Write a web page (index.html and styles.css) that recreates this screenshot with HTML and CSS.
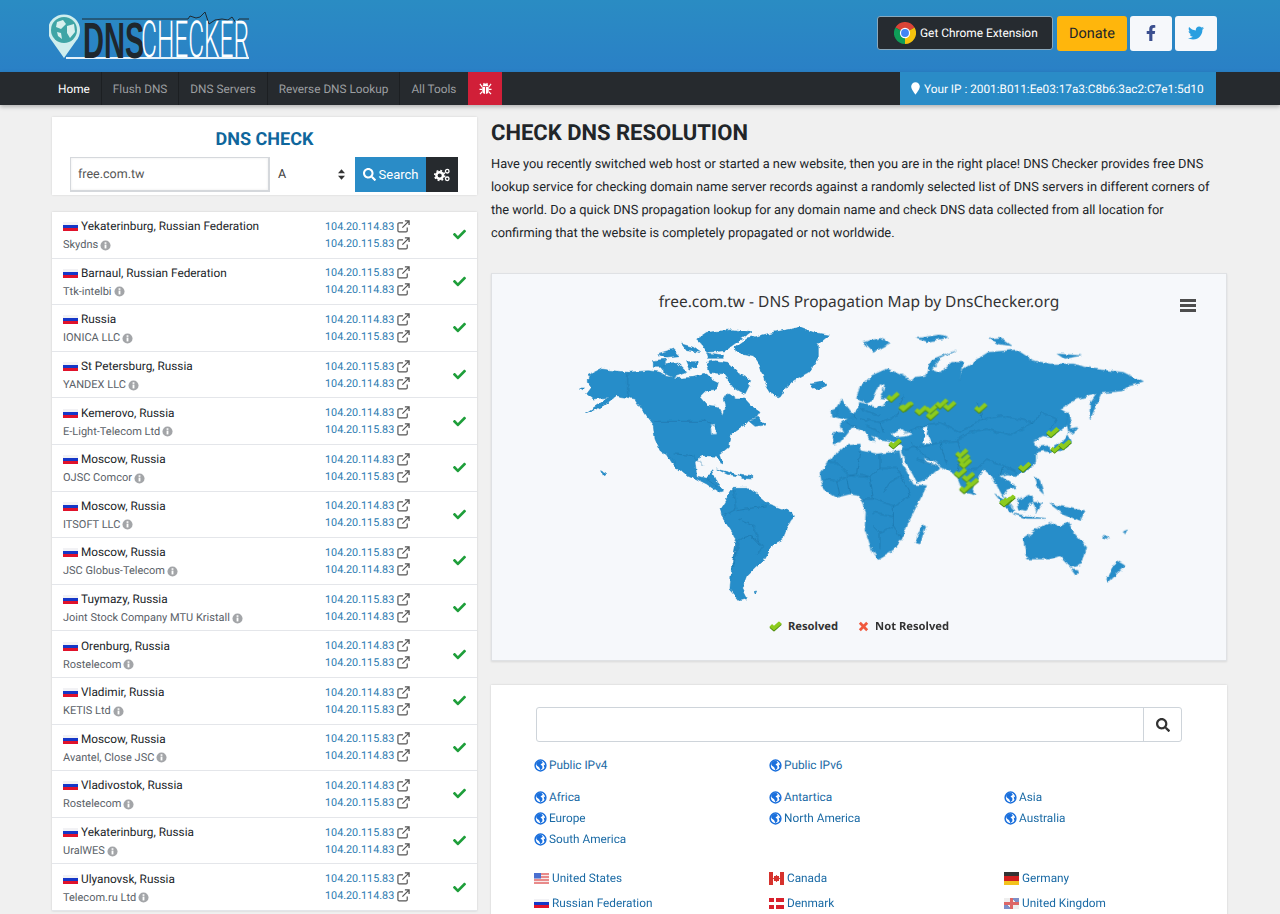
FILE: index.html
```html
<!DOCTYPE html>
<html lang="en">
<head>
<meta charset="utf-8">
<title>DNS Checker</title>
<link rel="stylesheet" href="styles.css">
</head>
<body>
<svg class="defs" width="0" height="0" aria-hidden="true">
  <filter id="rough" x="-5%" y="-5%" width="110%" height="110%"><feTurbulence type="fractalNoise" baseFrequency="0.05" numOctaves="3" seed="4"/><feDisplacementMap in="SourceGraphic" scale="14" xChannelSelector="R" yChannelSelector="G"/></filter>
  <symbol id="ext" viewBox="0 0 14 14"><path d="M11 8.200V11.500A1.300 1.300 0 0 1 9.700 12.800H2.300A1.300 1.300 0 0 1 1 11.500V4.300A1.300 1.300 0 0 1 2.300 3H6.500" fill="none" stroke="currentColor" stroke-width="1.300"/><path d="M5.800 8.200 12.500 1.500M8.500 1H13V5.500" fill="none" stroke="currentColor" stroke-width="1.400"/></symbol>
  <symbol id="check" viewBox="0 0 512 512"><path d="M173.898 439.404l-166.4-166.4c-9.997-9.997-9.997-26.206 0-36.204l36.203-36.204c9.997-9.998 26.207-9.998 36.204 0L192 312.69 432.095 72.596c9.997-9.997 26.207-9.997 36.204 0l36.203 36.204c9.997 9.997 9.997 26.206 0 36.204l-294.4 294.401c-9.998 9.997-26.207 9.997-36.204-.001z" fill="currentColor"/></symbol>
  <symbol id="search" viewBox="0 0 512 512"><path d="M505 442.7L405.3 343c-4.5-4.5-10.6-7-17-7H372c27.6-35.3 44-79.7 44-128C416 93.1 322.9 0 208 0S0 93.1 0 208s93.1 208 208 208c48.3 0 92.7-16.4 128-44v16.3c0 6.4 2.5 12.5 7 17l99.700 99.700c9.400 9.400 24.600 9.400 33.900 0l28.300-28.300c9.400-9.400 9.400-24.600.1-34zM208 336c-70.700 0-128-57.200-128-128 0-70.700 57.200-128 128-128 70.700 0 128 57.200 128 128 0 70.700-57.200 128-128 128z" fill="currentColor"/></symbol>
  <symbol id="info" viewBox="0 0 12 12"><circle cx="6" cy="6" r="5.500" fill="#a3a5a8"/><rect x="5" y="5" width="2" height="4.200" fill="#fff"/><rect x="5" y="2.500" width="2" height="1.700" fill="#fff"/></symbol>
  <symbol id="globe" viewBox="0 0 14 14"><circle cx="7" cy="7" r="5.800" fill="#fff" stroke="#1a6fdc" stroke-width="1.600"/><path d="M4 2.500 8 2 9.500 4 7 6 9 7.500 9 10 7 12 5.500 9 3 7 2.200 5Z" fill="#1a6fdc"/><path d="M10.500 6 12.500 7 11 10Z" fill="#1a6fdc"/></symbol>
  <symbol id="tick" viewBox="0 0 30 24">
    <path d="M1 15 7 9 11.500 13 23 2 29.500 8 11.500 24Z" fill="#4f8a10"/>
    <path d="M1 12.500 7 6.500 11.500 10.500 23 0 29.500 5.500 11.500 21.500Z" fill="#8ccb1e"/>
  </symbol>
</svg>

<header class="topbar">
  <a class="logo" href="#">
    <svg class="logo-art" viewBox="0 0 210 56" width="210" height="56" aria-hidden="true">
      <path d="M15 46 3 29A16 16 0 1 1 27 29Z" fill="#cfeeee"/>
      <circle cx="15" cy="18" r="13" fill="#3fa5a6"/>
      <path d="M8 10 14 8 17 12 12 17 7 15ZM18 14 25 12 26 20 21 26 18 21ZM8 20 12 21 13 27 9 24Z" fill="#d8f0ee"/>
      <path d="M17 46H200" stroke="#e4f2fb" stroke-width="1.800"/>
      <path d="M33 7H139L141 4 147 6 151 5 156 0 160 12 166 8 173 7 179 8 183 5 187 11 190 7H200" fill="none" stroke="#1f2a33" stroke-width="1"/>
    </svg>
    <span class="logo-dns"><span>DNS</span></span>
    <span class="logo-checker"><span>CHECKER</span></span>
  </a>
  <div class="top-actions">
    <a class="btn-chrome" href="#">
      <svg viewBox="0 0 24 24" width="22" height="22" aria-hidden="true">
        <path d="M12 12 1.600 6A12 12 0 0 1 22.400 6Z" fill="#db4437"/>
        <path d="M12 12 22.400 6A12 12 0 0 1 12 24Z" fill="#f4c20d"/>
        <path d="M12 12 12 24A12 12 0 0 1 1.600 6Z" fill="#0f9d58"/>
        <circle cx="12" cy="12" r="5.600" fill="#fff"/>
        <circle cx="12" cy="12" r="4.300" fill="#4285f4"/>
      </svg>
      Get Chrome Extension
    </a>
    <a class="btn-donate" href="#">Donate</a>
    <a class="btn-social" href="#"><svg viewBox="0 0 320 512" width="10" height="16" aria-hidden="true"><path fill="#3b4f8f" d="M279.14 288l14.22-92.66h-88.91v-60.130c0-25.350 12.420-50.060 52.240-50.060h40.420V6.260S260.430 0 225.360 0c-73.220 0-121.080 44.380-121.080 124.720v70.620H22.890V288h81.390v224h100.170V288z"/></svg></a>
    <a class="btn-social" href="#"><svg viewBox="0 0 512 512" width="16" height="16" aria-hidden="true"><path fill="#2a9fe0" d="M459.370 151.716c.325 4.548.325 9.097.325 13.645 0 138.720-105.583 298.558-298.558 298.558-59.452 0-114.680-17.219-161.137-47.106 8.447.974 16.568 1.299 25.340 1.299 49.055 0 94.213-16.568 130.274-44.832-46.132-.975-84.792-31.188-98.112-72.772 6.498.974 12.995 1.624 19.818 1.624 9.421 0 18.843-1.300 27.614-3.573-48.081-9.747-84.143-51.980-84.143-102.985v-1.299c13.969 7.797 30.214 12.670 47.431 13.319-28.264-18.843-46.781-51.005-46.781-87.391 0-19.492 5.197-37.360 14.294-52.954 51.655 63.675 129.300 105.258 216.365 109.807-1.624-7.797-2.599-15.918-2.599-24.040 0-57.828 46.782-104.934 104.934-104.934 30.213 0 57.502 12.670 76.670 33.137 23.715-4.548 46.456-13.320 66.599-25.340-7.798 24.366-24.366 44.833-46.132 57.827 21.117-2.273 41.584-8.122 60.426-16.243-14.292 20.791-32.161 39.308-52.628 54.253z"/></svg></a>
  </div>
</header>

<nav class="navbar">
  <a class="nav-item active" href="#">Home</a>
  <a class="nav-item" href="#">Flush DNS</a>
  <a class="nav-item" href="#">DNS Servers</a>
  <a class="nav-item" href="#">Reverse DNS Lookup</a>
  <a class="nav-item last" href="#">All Tools</a>
  <a class="nav-bug" href="#" aria-label="Report bug">
    <svg viewBox="0 0 14 14" width="13" height="13" aria-hidden="true"><path d="M4 4.500A3 3 0 0 1 10 4.500ZM3.500 5.500H6.500V13A3.500 3.500 0 0 1 3.500 10ZM7.500 5.500H10.500V10A3.500 3.500 0 0 1 7.500 13Z" fill="#fff"/><path d="M1 2 3.500 5.500M13 2 10.500 5.500M.5 8H3.500M13.500 8H10.500M1 13 3.500 10.500M13 13 10.500 10.500M5 1 6 3M9 1 8 3" stroke="#fff" stroke-width="1.200"/></svg>
  </a>
  <div class="nav-ip">
    <svg viewBox="0 0 10 14" width="9" height="13" aria-hidden="true"><path d="M5 0A4.800 4.800 0 0 1 9.800 4.800C9.800 8 6 12 5 14 4 12 .2 8 .2 4.800A4.800 4.800 0 0 1 5 0Z" fill="#fff"/></svg>
    Your IP : 2001:B011:Ee03:17a3:C8b6:3ac2:C7e1:5d10
  </div>
</nav>

<main class="layout">
  <section class="left">
    <div class="check-card">
      <h2>DNS CHECK</h2>
      <form class="check-form">
        <div class="check-input">free.com.tw</div>
        <div class="check-select">A
          <svg viewBox="0 0 8 12" width="7" height="11" aria-hidden="true"><path d="M4 0 8 4.500H0ZM4 12 0 7.500H8Z" fill="#333"/></svg>
        </div>
        <button class="check-btn" type="button"><svg width="13" height="13" aria-hidden="true"><use href="#search"/></svg> Search</button>
        <button class="gear-btn" type="button" aria-label="Settings">
          <svg viewBox="0 0 18 14" width="17" height="14" aria-hidden="true">
            <circle cx="6" cy="7.500" r="3.500" fill="none" stroke="#fff" stroke-width="2.600"/>
            <circle cx="6" cy="7.500" r="5.200" fill="none" stroke="#fff" stroke-width="1.800" stroke-dasharray="2 2.080"/>
            <circle cx="14" cy="3" r="1.900" fill="none" stroke="#fff" stroke-width="1.400"/>
            <circle cx="14" cy="11" r="1.900" fill="none" stroke="#fff" stroke-width="1.400"/>
          </svg>
        </button>
      </form>
    </div>

    <div class="results">
      <div class="row"><div class="loc"><div class="city"><i class="flag ru"></i>Yekaterinburg, Russian Federation</div><div class="isp">Skydns <svg class="info"><use href="#info"/></svg></div></div><div class="ips"><a>104.20.114.83 <svg class="ext"><use href="#ext"/></svg></a><a>104.20.115.83 <svg class="ext"><use href="#ext"/></svg></a></div><svg class="ok"><use href="#check"/></svg></div>
      <div class="row"><div class="loc"><div class="city"><i class="flag ru"></i>Barnaul, Russian Federation</div><div class="isp">Ttk-intelbi <svg class="info"><use href="#info"/></svg></div></div><div class="ips"><a>104.20.115.83 <svg class="ext"><use href="#ext"/></svg></a><a>104.20.114.83 <svg class="ext"><use href="#ext"/></svg></a></div><svg class="ok"><use href="#check"/></svg></div>
      <div class="row"><div class="loc"><div class="city"><i class="flag ru"></i>Russia</div><div class="isp">IONICA LLC <svg class="info"><use href="#info"/></svg></div></div><div class="ips"><a>104.20.114.83 <svg class="ext"><use href="#ext"/></svg></a><a>104.20.115.83 <svg class="ext"><use href="#ext"/></svg></a></div><svg class="ok"><use href="#check"/></svg></div>
      <div class="row"><div class="loc"><div class="city"><i class="flag ru"></i>St Petersburg, Russia</div><div class="isp">YANDEX LLC <svg class="info"><use href="#info"/></svg></div></div><div class="ips"><a>104.20.115.83 <svg class="ext"><use href="#ext"/></svg></a><a>104.20.114.83 <svg class="ext"><use href="#ext"/></svg></a></div><svg class="ok"><use href="#check"/></svg></div>
      <div class="row"><div class="loc"><div class="city"><i class="flag ru"></i>Kemerovo, Russia</div><div class="isp">E-Light-Telecom Ltd <svg class="info"><use href="#info"/></svg></div></div><div class="ips"><a>104.20.114.83 <svg class="ext"><use href="#ext"/></svg></a><a>104.20.115.83 <svg class="ext"><use href="#ext"/></svg></a></div><svg class="ok"><use href="#check"/></svg></div>
      <div class="row"><div class="loc"><div class="city"><i class="flag ru"></i>Moscow, Russia</div><div class="isp">OJSC Comcor <svg class="info"><use href="#info"/></svg></div></div><div class="ips"><a>104.20.114.83 <svg class="ext"><use href="#ext"/></svg></a><a>104.20.115.83 <svg class="ext"><use href="#ext"/></svg></a></div><svg class="ok"><use href="#check"/></svg></div>
      <div class="row"><div class="loc"><div class="city"><i class="flag ru"></i>Moscow, Russia</div><div class="isp">ITSOFT LLC <svg class="info"><use href="#info"/></svg></div></div><div class="ips"><a>104.20.114.83 <svg class="ext"><use href="#ext"/></svg></a><a>104.20.115.83 <svg class="ext"><use href="#ext"/></svg></a></div><svg class="ok"><use href="#check"/></svg></div>
      <div class="row"><div class="loc"><div class="city"><i class="flag ru"></i>Moscow, Russia</div><div class="isp">JSC Globus-Telecom <svg class="info"><use href="#info"/></svg></div></div><div class="ips"><a>104.20.115.83 <svg class="ext"><use href="#ext"/></svg></a><a>104.20.114.83 <svg class="ext"><use href="#ext"/></svg></a></div><svg class="ok"><use href="#check"/></svg></div>
      <div class="row"><div class="loc"><div class="city"><i class="flag ru"></i>Tuymazy, Russia</div><div class="isp">Joint Stock Company MTU Kristall <svg class="info"><use href="#info"/></svg></div></div><div class="ips"><a>104.20.115.83 <svg class="ext"><use href="#ext"/></svg></a><a>104.20.114.83 <svg class="ext"><use href="#ext"/></svg></a></div><svg class="ok"><use href="#check"/></svg></div>
      <div class="row"><div class="loc"><div class="city"><i class="flag ru"></i>Orenburg, Russia</div><div class="isp">Rostelecom <svg class="info"><use href="#info"/></svg></div></div><div class="ips"><a>104.20.114.83 <svg class="ext"><use href="#ext"/></svg></a><a>104.20.115.83 <svg class="ext"><use href="#ext"/></svg></a></div><svg class="ok"><use href="#check"/></svg></div>
      <div class="row"><div class="loc"><div class="city"><i class="flag ru"></i>Vladimir, Russia</div><div class="isp">KETIS Ltd <svg class="info"><use href="#info"/></svg></div></div><div class="ips"><a>104.20.114.83 <svg class="ext"><use href="#ext"/></svg></a><a>104.20.115.83 <svg class="ext"><use href="#ext"/></svg></a></div><svg class="ok"><use href="#check"/></svg></div>
      <div class="row"><div class="loc"><div class="city"><i class="flag ru"></i>Moscow, Russia</div><div class="isp">Avantel, Close JSC <svg class="info"><use href="#info"/></svg></div></div><div class="ips"><a>104.20.115.83 <svg class="ext"><use href="#ext"/></svg></a><a>104.20.114.83 <svg class="ext"><use href="#ext"/></svg></a></div><svg class="ok"><use href="#check"/></svg></div>
      <div class="row"><div class="loc"><div class="city"><i class="flag ru"></i>Vladivostok, Russia</div><div class="isp">Rostelecom <svg class="info"><use href="#info"/></svg></div></div><div class="ips"><a>104.20.114.83 <svg class="ext"><use href="#ext"/></svg></a><a>104.20.115.83 <svg class="ext"><use href="#ext"/></svg></a></div><svg class="ok"><use href="#check"/></svg></div>
      <div class="row"><div class="loc"><div class="city"><i class="flag ru"></i>Yekaterinburg, Russia</div><div class="isp">UralWES <svg class="info"><use href="#info"/></svg></div></div><div class="ips"><a>104.20.115.83 <svg class="ext"><use href="#ext"/></svg></a><a>104.20.114.83 <svg class="ext"><use href="#ext"/></svg></a></div><svg class="ok"><use href="#check"/></svg></div>
      <div class="row"><div class="loc"><div class="city"><i class="flag ru"></i>Ulyanovsk, Russia</div><div class="isp">Telecom.ru Ltd <svg class="info"><use href="#info"/></svg></div></div><div class="ips"><a>104.20.115.83 <svg class="ext"><use href="#ext"/></svg></a><a>104.20.114.83 <svg class="ext"><use href="#ext"/></svg></a></div><svg class="ok"><use href="#check"/></svg></div>
    </div>
  </section>

  <section class="right">
    <h1>CHECK DNS RESOLUTION</h1>
    <p class="intro">Have you recently switched web host or started a new website, then you are in the right place! DNS Checker provides free DNS lookup service for checking domain name server records against a randomly selected list of DNS servers in different corners of the world. Do a quick DNS propagation lookup for any domain name and check DNS data collected from all location for confirming that the website is completely propagated or not worldwide.</p>

    <div class="map-card">
      <div class="map-head">
        <div class="map-title">free.com.tw - DNS Propagation Map by DnsChecker.org</div>
        <span class="map-menu"><i></i><i></i><i></i></span>
      </div>
      <svg class="world" viewBox="0 0 1800 900" width="600" height="300" aria-hidden="true">
        <g filter="url(#rough)">
        <g class="land">
          <path d="M85,170 125,150 160,155 203,160 265,155 300,160 320,172 355,178 400,175 440,165 455,180 475,190 470,210 440,215 420,235 440,258 475,262 488,290 495,262 490,245 505,222 530,240 555,240 575,262 600,280 590,295 570,300 555,318 530,335 510,350 505,385 480,405 490,435 478,430 470,412 430,410 405,425 410,470 440,478 455,455 470,490 490,515 475,520 440,495 410,480 370,462 345,440 322,405 300,395 285,360 280,320 265,300 245,270 225,240 200,235 170,230 130,260 75,283 125,250 145,235 100,240 80,225 95,205 85,190Z"/>
          <path d="M320,405 335,415 352,447 335,430Z"/>
          <path d="M525,85 560,60 640,40 720,25 760,40 808,48 775,75 775,120 745,160 690,190 660,235 640,230 615,190 600,140 580,110 530,100Z"/>
          <path d="M750,195 790,188 800,200 770,212Z"/>
          <path d="M440,130 465,125 500,130 530,160 575,185 555,225 520,205 490,165 450,160Z"/>
          <path d="M410,60 440,40 520,32 575,38 530,70 495,95 440,100 425,75Z"/>
          <path d="M310,135 350,130 380,160 340,175 310,160Z"/>
          <path d="M280,125 320,120 310,145 280,145Z"/>
          <path d="M290,105 340,90 360,110 310,115Z"/>
          <path d="M365,75 400,85 420,100 380,95Z"/>
          <path d="M380,125 415,125 410,145 390,150Z"/>
          <path d="M440,102 490,108 490,118 445,118Z"/>
          <path d="M565,305 595,295 615,318 585,322Z"/>
          <path d="M470,450 510,460 540,472 500,465Z"/>
          <path d="M540,465 575,470 575,480 545,478Z"/>
          <path d="M125,455 138,462 130,467Z"/>
          <path d="M58,210 75,210 70,215Z"/>
          <path d="M490,555 520,505 560,505 590,525 625,555 695,580 700,595 680,625 670,660 640,675 615,720 590,740 560,770 545,810 560,840 540,845 510,810 515,740 530,660 490,600 480,570Z"/>
          <path d="M582,818 593,816 590,823Z"/>
          <g transform="translate(900 0)">
            <path d="M-80,340 -50,340 -60,318 -20,285 -5,265 -5,250 20,255 45,265 70,262 90,240 60,235 75,200 60,195 40,240 20,250 0,245 -10,235 0,205 35,170 80,150 115,165 155,185 165,175 200,170 215,125 285,97 240,118 215,150 240,160 275,130 310,130 300,185 310,150 335,135 345,125 385,100 470,93 520,125 570,135 640,135 700,150 790,160 850,190 810,200 790,215 725,222 690,300 690,255 710,225 650,240 600,270 625,285 620,320 570,355 550,350 520,365 530,385 565,380 570,400 550,395 530,400 530,430 490,460 465,470 440,465 420,470 470,505 445,510 430,530 460,565 425,525 395,470 370,450 340,500 335,525 310,520 290,470 240,440 225,430 190,415 200,430 240,445 200,480 172,490 132,420 124,395 130,378 60,362 35,345 45,368 30,365 15,335 -5,325 -25,325 -35,340 -60,372 -80,375Z"/>
            <path d="M-120,460 -80,410 -40,380 0,375 5,395 50,405 118,398 125,430 160,497 200,500 175,550 150,600 125,660 100,695 55,722 35,690 15,630 18,580 0,530 -30,525 -70,535 -110,510Z"/>
            <path d="M-85,290 -55,240 -40,265 -15,295 -50,300Z"/>
            <path d="M-88,275 -68,268 -65,288 -85,292Z"/>
            <path d="M565,395 600,375 625,345 635,370 605,395Z"/>
            <path d="M625,330 655,325 640,345Z"/>
            <path d="M625,280 635,310 625,340 620,310Z"/>
            <path d="M525,470 540,485 550,525 535,510Z"/>
            <path d="M405,525 430,540 465,575 450,580Z"/>
            <path d="M470,545 510,525 520,545 495,575 475,570Z"/>
            <path d="M460,585 555,598 500,598Z"/>
            <path d="M520,550 545,550 530,580Z"/>
            <path d="M570,555 640,570 675,575 660,605 610,585Z"/>
            <path d="M490,660 540,625 570,610 600,625 625,610 640,640 680,685 665,735 635,745 600,710 570,720 500,720 495,690Z"/>
            <path d="M635,752 655,755 648,770Z"/>
            <path d="M770,725 795,740 770,765 745,790 740,780Z"/>
            <path d="M190,612 197,625 180,675 165,670Z"/>
            <path d="M335,512 345,525 335,527Z"/>
            <path d="M10,70 60,58 90,72 40,100Z"/>
            <path d="M170,58 240,48 265,55 200,68Z"/>
            <path d="M390,60 420,55 455,80 415,75Z"/>
            <path d="M595,105 660,110 615,118Z"/>
            <path d="M735,648 745,660 730,655Z"/>
            <path d="M790,635 802,630 795,645Z"/>
          </g>
        </g>
        <g class="sea" transform="translate(900 0)">
          <path d="M185,325 205,322 200,345 213,375 190,372 195,350Z"/>
          <path d="M95,345 125,330 155,345 135,352 105,355Z"/>
          <path d="M-460,250 -440,220 -400,220 -420,240 -410,262 -445,258Z"/>
          <path d="M-450,315 -435,312 -430,345 -445,345Z"/>
        </g>
        <g class="borders">
          <path d="M203,160V235M285,307H440L470,325M345,405 400,410 430,440M440,480 470,500M520,510 530,570 490,590M530,575 620,560M535,600 580,620 600,680 570,650 540,660 515,750M570,650 610,680 590,710M530,660 520,740"/>
          <g transform="translate(900 0)">
            <path d="M-100,430 -70,430 -30,470 -10,465 0,395M-110,480 -70,485 -30,470 30,475 60,445 60,405M60,445 110,445 125,470 150,530 100,560 100,620 60,640 40,620M30,475 40,540 0,540M40,540 100,560M60,640 60,690M100,620 125,660M-70,485 -60,530M-40,480 -30,525M0,465 30,475M70,520 90,490 125,470M40,580 100,590"/>
            <path d="M0,300 60,310 110,290 130,230M60,310 70,340M0,270 60,290M-40,310 0,330M-10,300 -20,285M20,320 60,340M130,345 190,320 240,310 300,340 370,300 430,290 520,310 450,350 380,330 330,340 290,365 240,370 200,380M290,365 305,400 290,460 350,450 380,420 430,440 470,460M150,370 220,430M370,300 350,250M520,310 545,280 590,300 560,345M430,440 420,470M240,370 260,435M130,390 200,380M170,420 230,440"/>
          </g>
        </g>
        </g>
        <g class="ticks" transform="translate(900 0)">
          <use href="#tick" x="78" y="218" width="42" height="34"/><use href="#tick" x="120" y="246" width="42" height="34"/><use href="#tick" x="114" y="248" width="42" height="34"/><use href="#tick" x="162" y="258" width="42" height="34"/><use href="#tick" x="194" y="254" width="42" height="34"/><use href="#tick" x="224" y="238" width="42" height="34"/><use href="#tick" x="248" y="245" width="42" height="34"/><use href="#tick" x="196" y="272" width="42" height="34"/><use href="#tick" x="341" y="251" width="42" height="34"/><use href="#tick" x="557" y="324" width="42" height="34"/><use href="#tick" x="570" y="375" width="36" height="30"/><use href="#tick" x="594" y="361" width="42" height="34"/><use href="#tick" x="84" y="358" width="42" height="34"/><use href="#tick" x="284" y="388" width="42" height="34"/><use href="#tick" x="290" y="404" width="42" height="34"/><use href="#tick" x="295" y="418" width="42" height="34"/><use href="#tick" x="280" y="446" width="42" height="34"/><use href="#tick" x="304" y="458" width="42" height="34"/><use href="#tick" x="316" y="476" width="42" height="34"/><use href="#tick" x="296" y="492" width="42" height="34"/><use href="#tick" x="473" y="428" width="42" height="34"/><use href="#tick" x="426" y="526" width="42" height="34"/><use href="#tick" x="416" y="532" width="42" height="34"/>
        </g>
      </svg>
      <div class="legend">
        <span><svg viewBox="0 0 30 24" width="13" height="11" aria-hidden="true"><use href="#tick"/></svg>Resolved</span>
        <span><svg viewBox="0 0 12 12" width="11" height="11" aria-hidden="true"><path d="M2 2 10 10M10 2 2 10" stroke="#f0593e" stroke-width="3"/></svg>Not Resolved</span>
      </div>
    </div>

    <div class="server-card">
      <div class="server-search">
        <div class="server-input"></div>
        <div class="server-btn"><svg width="14" height="14" aria-hidden="true"><use href="#search"/></svg></div>
      </div>
      <div class="links first">
        <a><svg class="gl"><use href="#globe"/></svg>Public IPv4</a>
        <a><svg class="gl"><use href="#globe"/></svg>Public IPv6</a>
      </div>
      <div class="links">
        <a><svg class="gl"><use href="#globe"/></svg>Africa</a>
        <a><svg class="gl"><use href="#globe"/></svg>Antartica</a>
        <a><svg class="gl"><use href="#globe"/></svg>Asia</a>
        <a><svg class="gl"><use href="#globe"/></svg>Europe</a>
        <a><svg class="gl"><use href="#globe"/></svg>North America</a>
        <a><svg class="gl"><use href="#globe"/></svg>Australia</a>
        <a><svg class="gl"><use href="#globe"/></svg>South America</a>
      </div>
      <div class="links countries">
        <a><i class="flag us"></i>United States</a>
        <a><i class="flag ca"></i>Canada</a>
        <a><i class="flag de"></i>Germany</a>
        <a><i class="flag ru"></i>Russian Federation</a>
        <a><i class="flag dk"></i>Denmark</a>
        <a><i class="flag gb"></i>United Kingdom</a>
      </div>
    </div>
  </section>
</main>
</body>
</html>
```

FILE: styles.css
```css
* { box-sizing: border-box; }
html, body { height: 914px; overflow: hidden; }
body { margin: 0; background: #f0f0f0; font-family: Roboto, "Liberation Sans", sans-serif; font-size: 11.800px; color: #212529; text-rendering: geometricPrecision; }
a { text-decoration: none; color: inherit; }
.defs { display: block; height: 0; }

.topbar { height: 72px; background: linear-gradient(180deg, #2a8cc3, #2a80c6); display: flex; align-items: center; justify-content: space-between; padding: 0 63px 0 49px; }
.logo { position: relative; display: flex; width: 210px; height: 56px; padding: 9px 0 0 34px; }
.logo-art { position: absolute; left: 0; top: 4px; }
.logo-dns { display: block; width: 58px; font: 700 51px/48px "Liberation Sans", sans-serif; color: #1f272d; }
.logo-dns span { display: inline-block; transform: scaleX(.57); transform-origin: left; white-space: nowrap; }
.logo-checker { display: block; width: 108px; font: 300 51px/48px Roboto, sans-serif; color: #fff; }
.logo-checker span { display: inline-block; transform: scaleX(.48); transform-origin: left; white-space: nowrap; }
.top-actions { display: flex; gap: 3px; align-items: center; padding-bottom: 6px; }
.btn-chrome { display: flex; align-items: center; gap: 4px; width: 176px; height: 34px; padding-left: 16px; margin-right: 1px; background: #262b30; border: 1px solid #8aa9bd; border-radius: 3px; color: #fff; font-size: 11.900px; }
.btn-donate { display: flex; align-items: center; justify-content: center; width: 70px; height: 35px; background: #ffb60c; border-radius: 3px; font-size: 14.500px; color: #212529; }
.btn-social { display: flex; align-items: center; justify-content: center; width: 42px; height: 35px; background: #f6f8fb; border-radius: 3px; }

.navbar { height: 33px; background: #262a2e; display: flex; align-items: stretch; padding: 0 64px 0 47px; box-shadow: 0 2px 4px rgba(0,0,0,.25); position: relative; font-size: 11.800px; }
.nav-item { display: flex; align-items: center; padding: 0 11px; color: #9c9fa1; border-right: 1px solid #1c1f22; }
.nav-item.active { color: #fff; }
.nav-item.last { border-right: 0; }
.nav-bug { display: flex; align-items: center; justify-content: center; width: 34px; margin-left: 1px; background: #d11f38; }
.nav-ip { margin-left: auto; display: flex; align-items: center; gap: 4px; width: 316px; padding-left: 11px; background: #2a8cc7; color: #fff; white-space: nowrap; }
.nav-ip svg { flex: none; }

.layout { display: flex; gap: 14px; margin: 12px 53px 0 52px; }
.left { width: 425px; flex: none; }
.right { flex: 1; min-width: 0; }

.check-card { height: 78px; background: #fff; box-shadow: 0 0 2px rgba(0,0,0,.12); padding: 12px 18px 0; }
.check-card h2 { margin: 0 0 7px; text-align: center; font-size: 18px; line-height: 21px; font-weight: 700; color: #0f669c; }
.check-form { display: flex; height: 35px; }
.check-input { width: 200px; border: 1px solid #d5d8dc; border-width: 1px 2px 2px 1px; padding-left: 7px; line-height: 34px; font-size: 12.500px; color: #555; background: #fff; box-shadow: inset 0 0 3px rgba(0,0,0,.08); }
.check-select { width: 85px; display: flex; align-items: center; justify-content: space-between; padding: 0 10px 0 8px; font-size: 12.500px; color: #444; }
.check-btn { width: 71px; border: 0; padding: 0; background: #2a8cc7; color: #fff; font: 13px Roboto, sans-serif; display: flex; align-items: center; justify-content: center; gap: 3px; }
.gear-btn { width: 32px; border: 0; padding: 0; background: #262a2e; display: flex; align-items: center; justify-content: center; }

.results { margin-top: 17px; background: #fff; box-shadow: 0 0 2px rgba(0,0,0,.15); }
.row { display: flex; align-items: center; height: 46.600px; padding: 0 11px; border-bottom: 1.500px solid #e4e6ea; }
.loc { width: 262px; padding-top: 3px; }
.city { display: flex; align-items: center; font-size: 11.800px; line-height: 17px; color: #212529; }
.isp { margin-top: 1px; font-size: 11px; line-height: 18px; color: #5a6168; display: flex; align-items: center; gap: 2px; }
.info { width: 11px; height: 11px; }
.flag { display: inline-block; width: 15px; height: 9px; margin-right: 3px; flex: none; }
.flag.ru { background: linear-gradient(#f2f2f5 33%, #1537c8 33% 66%, #e0122b 66%); }
.flag.de { background: linear-gradient(#333 33%, #d01f1f 33% 66%, #f3c31c 66%); height: 13px; }
.flag.us { height: 11px; background: linear-gradient(90deg, #4a6fd0 45%, transparent 45%) 0 0/100% 50% no-repeat, repeating-linear-gradient(#e88a8a 0 2px, #f7eaea 2px 3px); }
.flag.ca { height: 13px; background: radial-gradient(circle, #d6322d 30%, transparent 32%), linear-gradient(90deg, #d6322d 25%, #fff 25% 75%, #d6322d 75%); }
.flag.dk { height: 11px; background: linear-gradient(90deg, transparent 33%, #fff 33% 47%, transparent 47%), linear-gradient(transparent 40%, #fff 40% 60%, transparent 60%), #d8202c; }
.flag.gb { height: 11px; background: linear-gradient(90deg, transparent 42%, #d66 42% 58%, transparent 58%), linear-gradient(transparent 40%, #d66 40% 60%, transparent 60%), linear-gradient(45deg, #7d8fc8 30%, #eee 30% 70%, #7d8fc8 70%); }
.ips { width: 100px; }
.ips a { display: flex; align-items: center; gap: 3px; line-height: 17px; font-size: 10.800px; color: #2a7ab0; white-space: nowrap; }
.ext { width: 13px; height: 13px; color: #555; flex: none; }
.ok { width: 13px; height: 13px; margin-left: 28px; color: #1e9e3a; flex: none; }

h1 { margin: 3px 0 0; font-size: 22px; line-height: 28px; font-weight: 700; color: #212529; }
.intro { margin: 5px 0 0; font-size: 12.800px; line-height: 23px; color: #212529; }

.map-card { margin-top: 28px; height: 388px; background: #f6f8fb; border: 1px solid #dfe1e4; box-shadow: 0 1px 2px rgba(0,0,0,.1); }
.map-head { display: flex; align-items: center; height: 45px; padding-top: 8px; position: relative; }
.map-title { flex: 1; text-align: center; font-family: "Noto Sans", sans-serif; font-size: 15.500px; color: #333; }
.map-menu { position: absolute; right: 30px; top: 25px; display: flex; flex-direction: column; gap: 2px; }
.map-menu i { display: block; width: 16px; height: 3px; background: #4d4d4d; }
.world { display: block; margin-left: 68px; }
.land path { fill: #268dc9; stroke: #1f82bc; stroke-width: 1.500; stroke-linejoin: round; }
.sea path { fill: #f6f8fb; }
.borders path { fill: none; stroke: #1d76ab; stroke-width: 2; }
.legend { display: flex; justify-content: center; gap: 20px; font: 700 11.200px "Noto Sans", sans-serif; color: #333; }
.legend span { display: flex; align-items: center; gap: 6px; }

.server-card { margin-top: 24px; height: 300px; background: #fff; box-shadow: 0 0 2px rgba(0,0,0,.15); padding: 22px 44px 0 45px; }
.server-search { display: flex; height: 35px; width: 646px; border: 1px solid #ced4da; border-radius: 3px; }
.server-input { flex: 1; }
.server-btn { width: 38px; border-left: 1px solid #ced4da; display: flex; align-items: center; justify-content: center; color: #333; }
.links { display: grid; grid-template-columns: 235px 235px 235px; margin-left: -2px; margin-top: 11px; }
.links.first { margin-top: 13px; }
.links a { display: flex; align-items: center; line-height: 21px; font-size: 11.800px; color: #1a6aa5; }
.gl { width: 13px; height: 13px; margin-right: 2px; flex: none; }
.links.countries { margin-top: 18px; row-gap: 4px; }
.countries .flag { margin-right: 3px; }
```
